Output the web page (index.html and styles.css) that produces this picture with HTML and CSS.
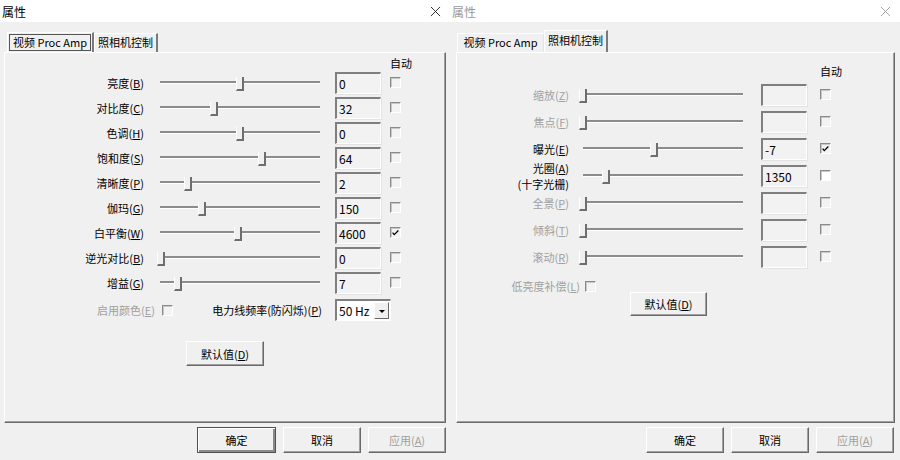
FILE: index.html
```html
<!DOCTYPE html>
<html lang="zh-CN">
<head>
  <meta charset="UTF-8">
  <title>属性</title>
  <link rel="stylesheet" href="styles.css">
</head>
<body>

  <!-- 左: 视频 Proc Amp -->
  <div class="dialog active">
    <div class="titlebar">
      <span class="title">属性</span>
      <svg class="close" viewBox="0 0 12 12"><path d="M1 1L11 11M11 1L1 11"/></svg>
    </div>
    <div class="tabs">
      <div class="tab tab-amp selected"><span class="focus">视频 Proc Amp</span></div>
      <div class="tab tab-cam">照相机控制</div>
    </div>
    <div class="panel panel-amp">
      <div class="auto-head">自动</div>

      <div class="row">
        <span class="label">亮度(<u>B</u>)</span>
        <div class="slider"><div class="track"></div><div class="thumb" style="left:76px"></div></div>
        <div class="edit">0</div>
        <span class="check"></span>
      </div>
      <div class="row">
        <span class="label">对比度(<u>C</u>)</span>
        <div class="slider"><div class="track"></div><div class="thumb" style="left:50px"></div></div>
        <div class="edit">32</div>
        <span class="check"></span>
      </div>
      <div class="row">
        <span class="label">色调(<u>H</u>)</span>
        <div class="slider"><div class="track"></div><div class="thumb" style="left:76px"></div></div>
        <div class="edit">0</div>
        <span class="check"></span>
      </div>
      <div class="row">
        <span class="label">饱和度(<u>S</u>)</span>
        <div class="slider"><div class="track"></div><div class="thumb" style="left:98px"></div></div>
        <div class="edit">64</div>
        <span class="check"></span>
      </div>
      <div class="row">
        <span class="label">清晰度(<u>P</u>)</span>
        <div class="slider"><div class="track"></div><div class="thumb" style="left:24px"></div></div>
        <div class="edit">2</div>
        <span class="check"></span>
      </div>
      <div class="row">
        <span class="label">伽玛(<u>G</u>)</span>
        <div class="slider"><div class="track"></div><div class="thumb" style="left:38px"></div></div>
        <div class="edit">150</div>
        <span class="check"></span>
      </div>
      <div class="row">
        <span class="label">白平衡(<u>W</u>)</span>
        <div class="slider"><div class="track"></div><div class="thumb" style="left:74px"></div></div>
        <div class="edit">4600</div>
        <span class="check checked"><svg viewBox="0 0 11 11"><path d="M2 5L4 7.5L9 2.5"/></svg></span>
      </div>
      <div class="row">
        <span class="label">逆光对比(<u>B</u>)</span>
        <div class="slider"><div class="track"></div><div class="thumb" style="left:-3px"></div></div>
        <div class="edit">0</div>
        <span class="check"></span>
      </div>
      <div class="row">
        <span class="label">增益(<u>G</u>)</span>
        <div class="slider"><div class="track"></div><div class="thumb" style="left:14px"></div></div>
        <div class="edit">7</div>
        <span class="check"></span>
      </div>

      <div class="extra-row">
        <span class="enable-label disabled">启用颜色(<u>E</u>)</span>
        <span class="check"></span>
        <span class="power-label">电力线频率(防闪烁)(<u>P</u>)</span>
        <div class="combo">
          <span class="combo-text">50 Hz</span>
          <span class="combo-arrow"></span>
        </div>
      </div>

      <button class="btn btn-reset">默认值(<u>D</u>)</button>
    </div>
    <div class="footer">
      <button class="btn default">确定</button>
      <button class="btn">取消</button>
      <button class="btn" disabled>应用(<u>A</u>)</button>
    </div>
  </div>

  <!-- 右: 照相机控制 -->
  <div class="dialog inactive">
    <div class="titlebar">
      <span class="title">属性</span>
      <svg class="close" viewBox="0 0 12 12"><path d="M1 1L11 11M11 1L1 11"/></svg>
    </div>
    <div class="tabs">
      <div class="tab tab-amp plain">视频 Proc Amp</div>
      <div class="tab tab-cam selected">照相机控制</div>
    </div>
    <div class="panel panel-cam">
      <div class="auto-head">自动</div>

      <div class="row">
        <span class="label disabled">缩放(<u>Z</u>)</span>
        <div class="slider"><div class="track"></div><div class="thumb" style="left:-4px"></div></div>
        <div class="edit"></div>
        <span class="check"></span>
      </div>
      <div class="row">
        <span class="label disabled">焦点(<u>F</u>)</span>
        <div class="slider"><div class="track"></div><div class="thumb" style="left:-4px"></div></div>
        <div class="edit"></div>
        <span class="check"></span>
      </div>
      <div class="row">
        <span class="label">曝光(<u>E</u>)</span>
        <div class="slider"><div class="track"></div><div class="thumb" style="left:67px"></div></div>
        <div class="edit">-7</div>
        <span class="check checked"><svg viewBox="0 0 11 11"><path d="M2 5L4 7.5L9 2.5"/></svg></span>
      </div>
      <div class="row">
        <span class="label two-line">光圈(<u>A</u>)<br>(十字光栅)</span>
        <div class="slider"><div class="track"></div><div class="thumb" style="left:19px"></div></div>
        <div class="edit">1350</div>
        <span class="check white"></span>
      </div>
      <div class="row">
        <span class="label disabled">全景(<u>P</u>)</span>
        <div class="slider"><div class="track"></div><div class="thumb" style="left:-4px"></div></div>
        <div class="edit"></div>
        <span class="check"></span>
      </div>
      <div class="row">
        <span class="label disabled">倾斜(<u>T</u>)</span>
        <div class="slider"><div class="track"></div><div class="thumb" style="left:-4px"></div></div>
        <div class="edit"></div>
        <span class="check"></span>
      </div>
      <div class="row">
        <span class="label disabled">滚动(<u>R</u>)</span>
        <div class="slider"><div class="track"></div><div class="thumb" style="left:-4px"></div></div>
        <div class="edit"></div>
        <span class="check"></span>
      </div>

      <div class="lowlight-row">
        <span class="lowlight-label disabled">低亮度补偿(<u>L</u>)</span>
        <span class="check"></span>
      </div>

      <button class="btn btn-reset">默认值(<u>D</u>)</button>
    </div>
    <div class="footer">
      <button class="btn default">确定</button>
      <button class="btn">取消</button>
      <button class="btn" disabled>应用(<u>A</u>)</button>
    </div>
  </div>

</body>
</html>
```

FILE: styles.css
```css
body {
  margin: 0;
  display: flex;
  background: #f0f0f0;
  font-family: "Noto Sans CJK SC", "Noto Sans", sans-serif;
  font-size: 11px;
  color: #000;
}

u {
  text-underline-offset: 1px;
}

.dialog {
  width: 450px;
  height: 460px;
  display: flex;
  flex-direction: column;
  box-sizing: border-box;
}

/* 标题栏 */
.titlebar {
  height: 22px;
  flex-shrink: 0;
  background: #fff;
  display: flex;
  align-items: center;
  justify-content: space-between;
  padding: 0 9px 0 2px;
}

.title {
  font-size: 12px;
}

.close {
  width: 11px;
  height: 11px;
}

.close path {
  stroke: #222;
  stroke-width: 1;
  fill: none;
}

.inactive .title {
  color: #999;
}

.inactive .close path {
  stroke: #999;
}

/* 标签页 */
.tabs {
  height: 30px;
  flex-shrink: 0;
  display: flex;
  align-items: flex-end;
  padding-left: 7px;
}

.tab {
  height: 19px;
  box-sizing: border-box;
  border-top: 1px solid #fff;
  border-left: 1px solid #fff;
  border-right: 2px solid #7a7a7a;
  display: flex;
  align-items: center;
  justify-content: center;
  line-height: 1;
  padding-bottom: 1px;
}

.tab-amp {
  width: 87px;
}

.tab-cam {
  width: 64px;
}

.tab.selected {
  height: 22px;
  padding-bottom: 3px;
}

.tab.plain {
  border-right: 1px solid #e3e3e3;
}

.focus {
  border: 1px solid #555;
  padding: 2px 3px;
}

.active .tab.selected {
  height: 20px;
  padding-bottom: 1px;
}

/* 面板 */
.panel {
  height: 371px;
  flex-shrink: 0;
  box-sizing: border-box;
  border-top: 1px solid #fff;
  border-left: 1px solid #fff;
  border-right: 1px solid #696969;
  border-bottom: 1px solid #696969;
  box-shadow: inset -1px -1px #a0a0a0;
}

.panel-amp {
  margin-left: 4px;
  width: 442px;
  padding-top: 3px;
}

.panel-cam {
  margin-left: 6px;
  width: 439px;
  padding-top: 10px;
}

.auto-head {
  height: 14px;
  line-height: 14px;
}

.panel-amp .auto-head {
  margin-left: 385px;
}

.panel-cam .auto-head {
  margin-left: 363px;
  height: 16px;
  line-height: 16px;
  margin-bottom: 2px;
}

.row {
  display: flex;
  align-items: center;
  height: 25px;
}

.panel-cam .row {
  height: 27px;
}

.label {
  text-align: right;
  flex-shrink: 0;
  white-space: nowrap;
}

.panel-amp .label {
  width: 139px;
}

.panel-cam .label {
  width: 112px;
}

.two-line {
  line-height: 16px;
}

.disabled {
  color: #a0a0a0;
}

/* 滑块 */
.slider {
  position: relative;
  width: 164px;
  height: 100%;
  display: flex;
  align-items: center;
  flex-shrink: 0;
}

.panel-amp .slider {
  margin-left: 14px;
}

.panel-cam .slider {
  margin-left: 12px;
}

.track {
  width: 160px;
  margin: 0 2px;
  height: 0;
  border-top: 2px solid #8c8c8c;
  border-bottom: 1px solid #fff;
}

.thumb {
  position: absolute;
  top: 50%;
  margin-top: -6px;
  margin-left: 2px;
  width: 5px;
  height: 12px;
  background: #f0f0f0;
  border-left: 1px solid #fff;
  border-right: 2px solid #6e6e6e;
  border-bottom: 2px solid #6e6e6e;
}

/* 编辑框 */
.edit {
  width: 46px;
  height: 22px;
  box-sizing: border-box;
  flex-shrink: 0;
  border-top: 2px solid #7f7f7f;
  border-left: 2px solid #7f7f7f;
  border-right: 1px solid #fff;
  border-bottom: 1px solid #fff;
  box-shadow: 1px 1px #e3e3e3;
  background: #f2f2f2;
  padding-left: 2px;
  line-height: 19px;
  font-size: 12px;
}

.panel-amp .edit {
  margin-left: 13px;
}

.panel-cam .edit {
  margin-left: 16px;
}

/* 复选框 */
.check {
  width: 11px;
  height: 11px;
  box-sizing: border-box;
  flex-shrink: 0;
  border-top: 1px solid #8a8a8a;
  border-left: 1px solid #8a8a8a;
  border-right: 1px solid #fff;
  border-bottom: 1px solid #fff;
  box-shadow: inset 1px 1px #c8c8c8;
  background: #f3f3f3;
  display: inline-flex;
}

.check.white {
  background: #fff;
}

.check svg {
  width: 10px;
  height: 10px;
}

.check svg path {
  stroke: #000;
  stroke-width: 1.6;
  fill: none;
}

.panel-amp .row .check {
  margin-left: 9px;
}

.panel-cam .row .check {
  margin-left: 13px;
}

/* 启用颜色 / 电力线频率 */
.extra-row {
  display: flex;
  align-items: center;
  height: 24px;
  margin-top: 3px;
}

.enable-label {
  width: 150px;
  text-align: right;
  margin-right: 7px;
}

.power-label {
  width: 149px;
  text-align: right;
  margin-right: 13px;
  white-space: nowrap;
}

.combo {
  width: 56px;
  height: 22px;
  box-sizing: border-box;
  border-top: 2px solid #7f7f7f;
  border-left: 2px solid #7f7f7f;
  border-right: 1px solid #fff;
  border-bottom: 1px solid #fff;
  background: #fff;
  display: flex;
  align-items: stretch;
  padding: 1px;
}

.combo-text {
  flex: 1;
  padding-left: 1px;
  line-height: 17px;
  font-size: 12px;
}

.combo-arrow {
  width: 15px;
  box-sizing: border-box;
  background: #f0f0f0;
  border-top: 1px solid #fff;
  border-left: 1px solid #fff;
  border-right: 1px solid #696969;
  border-bottom: 1px solid #696969;
  display: flex;
  align-items: center;
  justify-content: center;
}

.combo-arrow::after {
  content: "";
  border-left: 3px solid transparent;
  border-right: 3px solid transparent;
  border-top: 3px solid #000;
  margin-top: 1px;
}

/* 低亮度补偿 */
.lowlight-row {
  display: flex;
  align-items: center;
  height: 12px;
  margin-top: 10px;
}

.lowlight-label {
  width: 123px;
  text-align: right;
  margin-right: 5px;
  line-height: 12px;
}

/* 按钮 */
.btn {
  font-family: inherit;
  font-size: 11px;
  color: #000;
  background: #f0f0f0;
  width: 78px;
  height: 26px;
  padding: 0;
  border: 1px solid;
  border-color: #fff #696969 #696969 #fff;
  box-shadow: inset -1px -1px #a0a0a0;
}

.btn:disabled {
  color: #a0a0a0;
}

.btn.default {
  width: 79px;
  border-color: #505050;
  box-shadow: inset 1px 1px #fff, inset -2px -2px #8a8a8a;
}

.inactive .btn.default {
  width: 78px;
  border-color: #fff #696969 #696969 #fff;
  box-shadow: inset -1px -1px #a0a0a0;
}

.btn-reset {
  display: block;
}

.panel-amp .btn-reset {
  width: 78px;
  height: 25px;
  margin: 19px auto 0;
}

.panel-cam .btn-reset {
  width: 77px;
  height: 24px;
  margin: 0 0 0 173px;
}

.footer {
  display: flex;
  justify-content: flex-end;
  gap: 7px;
  padding-top: 4px;
}

.active .footer {
  padding-right: 4px;
}

.inactive .footer {
  padding-right: 6px;
}
```
